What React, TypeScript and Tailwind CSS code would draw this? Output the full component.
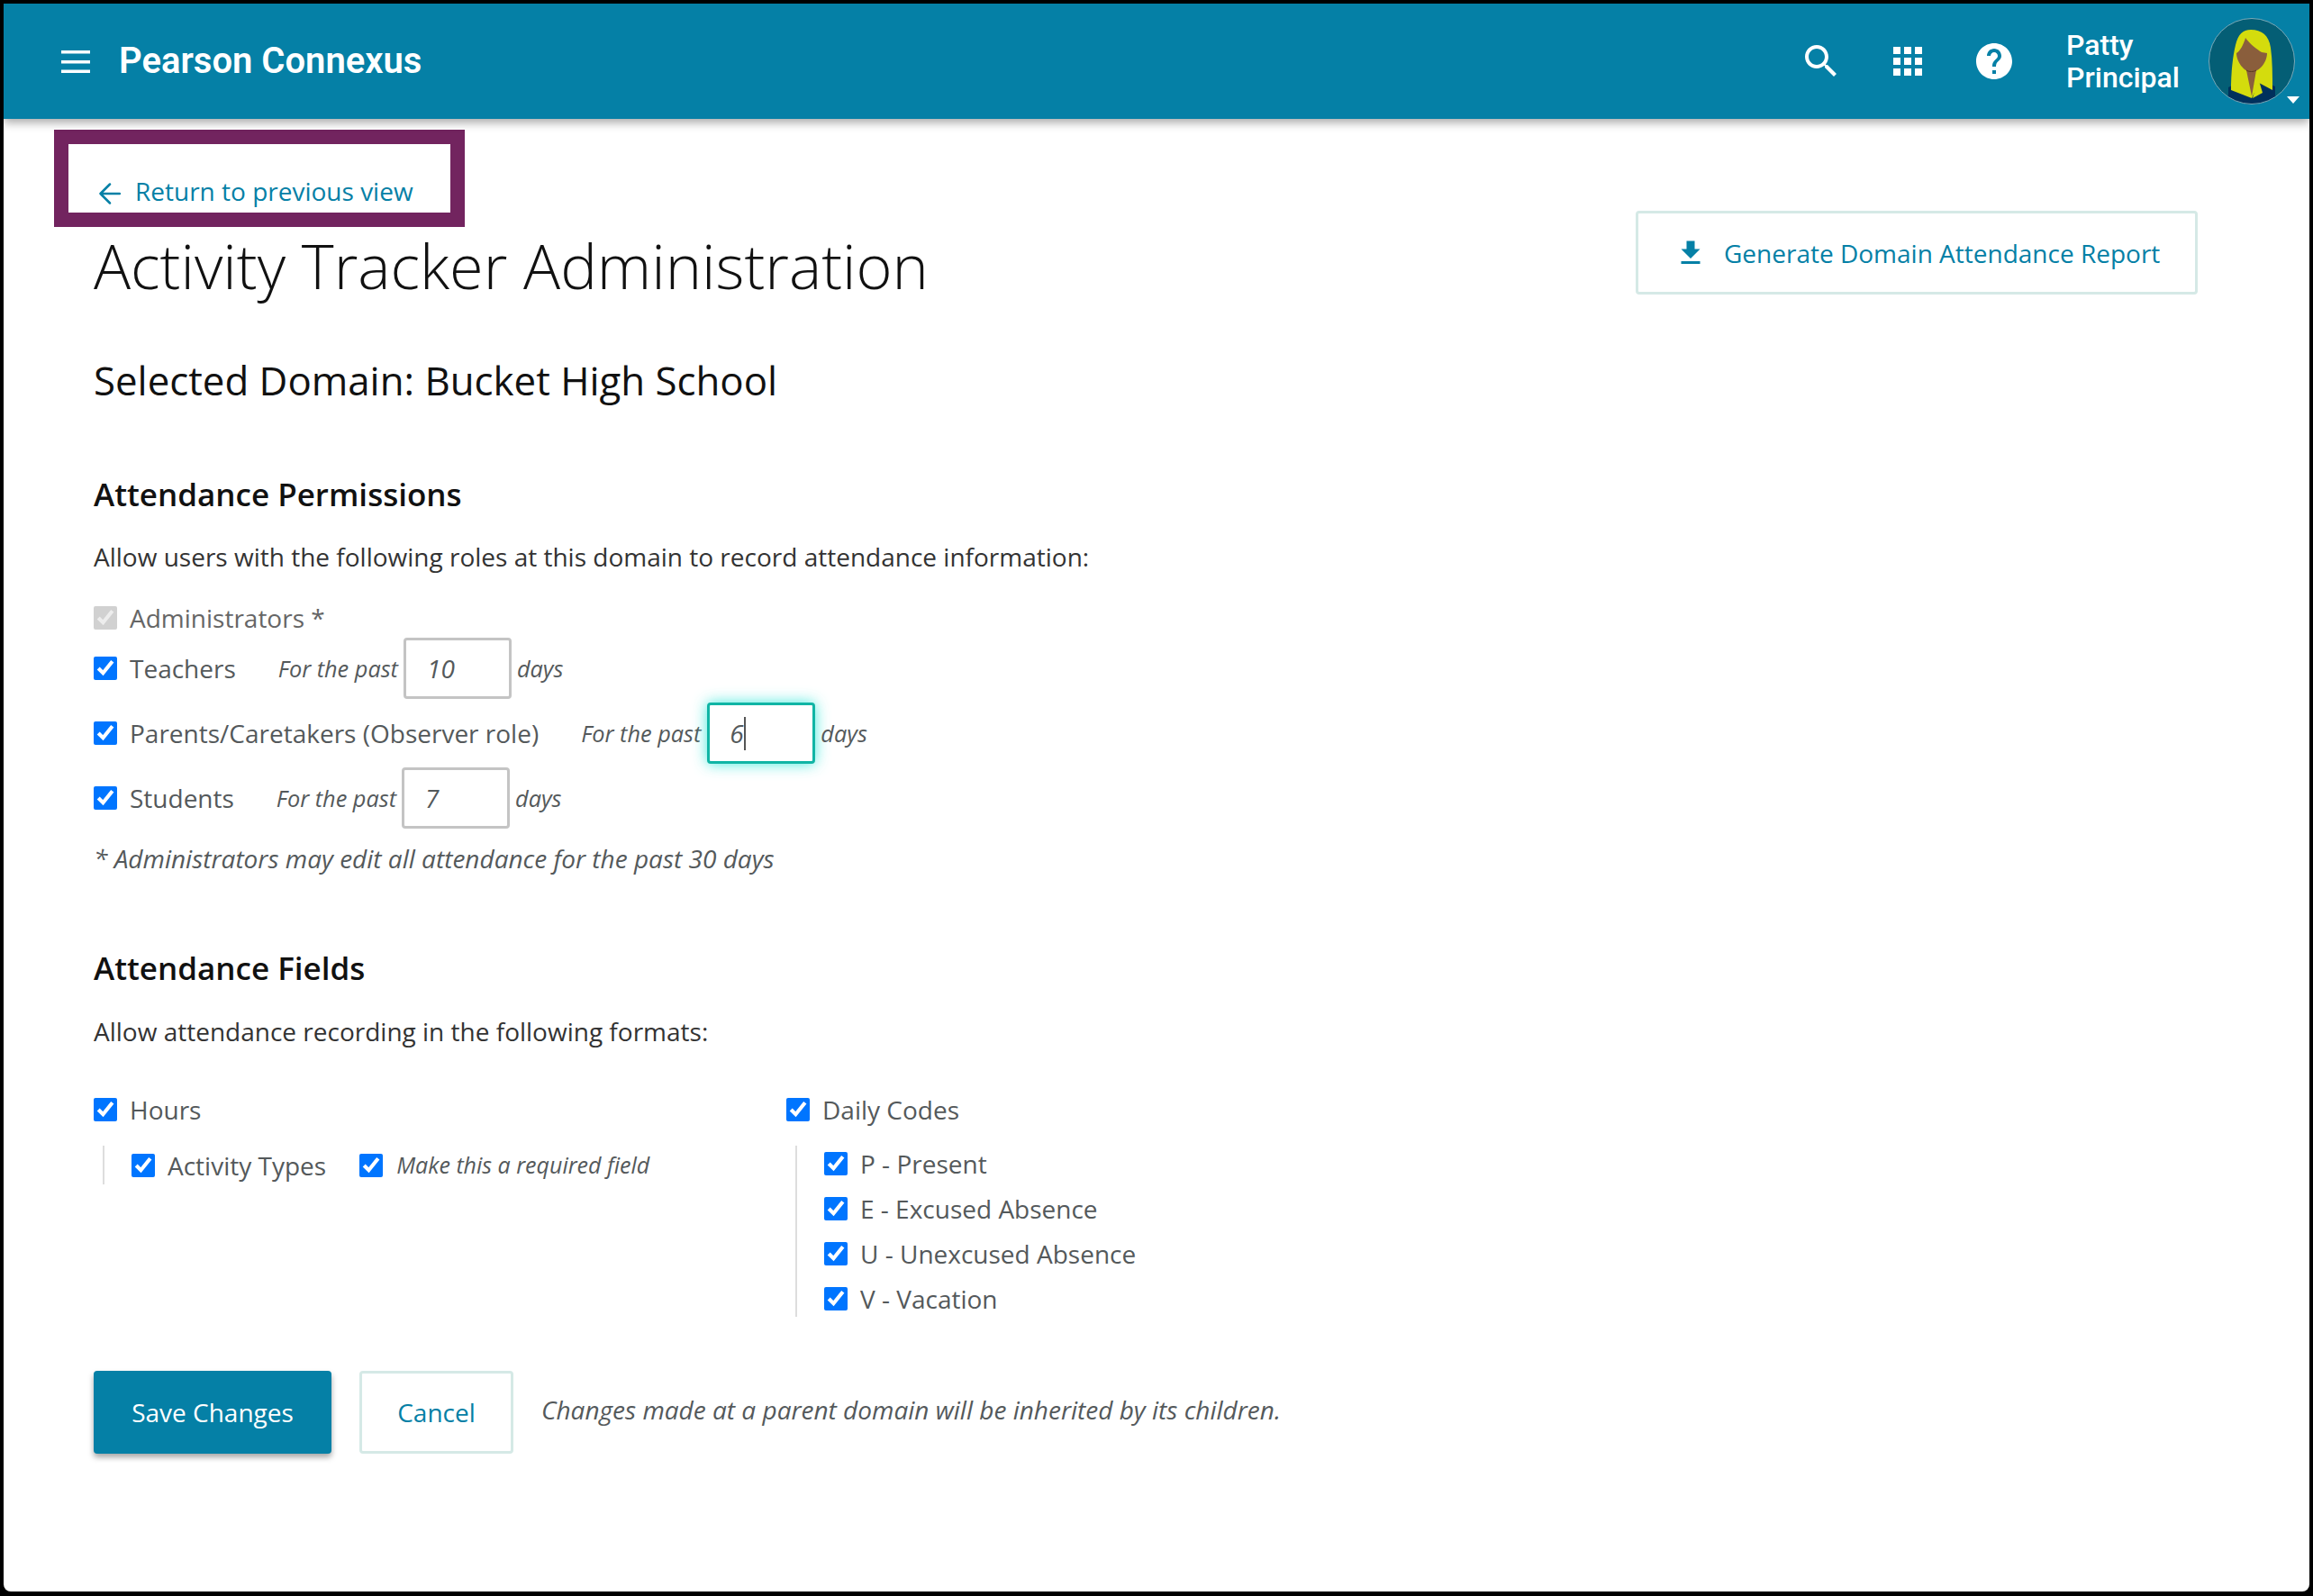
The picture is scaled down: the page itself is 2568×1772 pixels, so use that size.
import type { ReactNode } from "react";

const BODY = "font-['Open_Sans',sans-serif]";

function Check({ disabled }: { disabled?: boolean }) {
  return (
    <input
      type="checkbox"
      defaultChecked
      disabled={disabled}
      className="w-[26px] h-[26px] m-0 shrink-0"
    />
  );
}

function DaysField({ value, gap, focused }: { value: string; gap: string; focused?: boolean }) {
  return (
    <div className={`flex items-center ${gap}`}>
      <span className="pt-[2px] text-[25.3px] italic text-[#54595b]">For the past</span>
      <div
        className={
          focused
            ? "ml-[7px] w-[120px] h-[68px] flex items-center pl-[22px] bg-white rounded-[4px] border-[3px] border-[#10b5a5] shadow-[0_0_16px_rgba(40,230,215,0.85)] text-[28px] italic text-[#54595b]"
            : "ml-[6px] w-[120px] h-[68px] flex items-center pl-[23px] bg-white rounded-[4px] border-[3px] border-[#c4c4c4] text-[28px] italic text-[#54595b]"
        }
      >
        <span>{value}</span>
        {focused && <span className="w-[2px] h-[37px] bg-[#555]" />}
      </div>
      <span className="ml-[6px] pt-[2px] text-[25.3px] italic text-[#54595b]">days</span>
    </div>
  );
}

function RoleRow({ label, children, className }: { label: string; children?: ReactNode; className?: string }) {
  return (
    <div className={`flex items-center gap-[14px] text-[28px] text-[#54595b] ${className ?? ""}`}>
      <Check />
      <span>{label}</span>
      {children}
    </div>
  );
}

function CodeRow({ label }: { label: string }) {
  return (
    <div className="h-[50px] shrink-0 flex items-center gap-[14px] text-[28px] text-[#54595b]">
      <Check />
      <span>{label}</span>
    </div>
  );
}

function Avatar() {
  return (
    <svg viewBox="0 0 96 96" className="w-[96px] h-[96px]">
      <defs>
        <clipPath id="av">
          <circle cx="48" cy="48" r="47.5" />
        </clipPath>
      </defs>
      <g clipPath="url(#av)">
        <rect width="96" height="96" fill="#045e75" />
        <path d="M22 96V77l12-6h28l12 5v20z" fill="#00305c" />
        <path d="M47 13c12 0 20 6 22 20 2 14 2 30 2 47l-15-8-8 17-23-9c0-20 2-38 5-50 3-12 8-17 17-17z" fill="#d4dc0d" />
        <path d="M42 58h11l-5 29z" fill="#8a5e3c" />
        <path d="M55 66l5 17-11 6z" fill="#d4dc0d" />
        <path d="M41 22c4 6 13 13 18 16l6 1c0 9-7 20-17 21-9 0-17-12-17-21 4-2 8-10 10-17z" fill="#8a5e3c" />
        <path d="M42 58c3 2 8 2 11 0" fill="none" stroke="#5a3a20" strokeWidth="1" />
      </g>
      <circle cx="48" cy="48" r="47.5" fill="none" stroke="#7aa9b8" strokeWidth="1" />
    </svg>
  );
}

export default function App() {
  return (
    <div className={`w-[2568px] h-[1772px] bg-black pt-[4px] px-[4px] pb-[5px] ${BODY}`}>
      <div className="relative w-full h-full flex flex-col bg-white overflow-hidden rounded-b-[8px]">
        <header className="h-[128px] shrink-0 flex items-center bg-[#0580a6] text-white pl-[64px] pr-[16px] shadow-[0_4px_10px_rgba(0,0,0,0.35)] z-10">
          <svg viewBox="0 0 32 25" className="w-[32px] h-[25px]" fill="white">
            <rect width="32" height="3.5" y="0" />
            <rect width="32" height="3.5" y="11" />
            <rect width="32" height="3.5" y="21.5" />
          </svg>
          <span className="ml-[32px] text-[40px] font-semibold font-['Roboto',sans-serif]">Pearson Connexus</span>
          <div className="ml-auto flex items-center">
            <svg viewBox="0 0 24 24" className="w-[48px] h-[48px]" fill="white">
              <path d="M15.5 14h-.79l-.28-.27C15.41 12.59 16 11.11 16 9.5 16 5.91 13.09 3 9.5 3S3 5.91 3 9.5 5.91 16 9.5 16c1.61 0 3.09-.59 4.23-1.57l.27.28v.79l5 4.99L20.49 19l-4.99-5zm-6 0C7.01 14 5 11.99 5 9.5S7.01 5 9.5 5 14 7.01 14 9.5 11.99 14 9.5 14z" />
            </svg>
            <svg viewBox="0 0 24 24" className="ml-[48px] w-[48px] h-[48px]" fill="white">
              <path d="M4 8h4V4H4v4zm6 12h4v-4h-4v4zm-6 0h4v-4H4v4zm0-6h4v-4H4v4zm6 0h4v-4h-4v4zm6-10v4h4V4h-4zm-6 4h4V4h-4v4zm6 6h4v-4h-4v4zm0 6h4v-4h-4v4z" />
            </svg>
            <svg viewBox="0 0 24 24" className="ml-[48px] w-[48px] h-[48px]" fill="white">
              <path d="M12 2C6.48 2 2 6.48 2 12s4.48 10 10 10 10-4.48 10-10S17.52 2 12 2zm1 17h-2v-2h2v2zm2.07-7.75l-.9.92C13.45 12.9 13 13.5 13 15h-2v-.5c0-1.1.45-2.1 1.17-2.83l1.24-1.26c.37-.36.59-.86.59-1.41 0-1.1-.9-2-2-2s-2 .9-2 2H8c0-2.21 1.79-4 4-4s4 1.79 4 4c0 .88-.36 1.68-.93 2.25z" />
            </svg>
            <div className="ml-[56px] w-[158px] text-[32px] leading-[36px] font-medium font-['Roboto',sans-serif]">
              Patty
              <br />
              Principal
            </div>
            <div className="relative">
              <Avatar />
              <div className="absolute right-[-5px] bottom-[1px] w-0 h-0 border-l-[7px] border-r-[7px] border-t-[8px] border-l-transparent border-r-transparent border-t-white" />
            </div>
          </div>
        </header>

        {/* highlight box around the back link */}
        <div className="absolute left-[56px] top-[140px] w-[456px] h-[108px] border-[16px] border-[#72245f]" />

        <main className="pl-[100px] pr-[124px] flex flex-col">
          <a className="mt-[63px] h-[34px] flex items-center text-[28px] text-[#0580a6]">
            <svg viewBox="0 0 24 24" className="ml-[6px] w-[24px] h-[24px] mt-[6px]" fill="none" stroke="#0580a6" strokeWidth="2.5" strokeLinecap="round" strokeLinejoin="round">
              <path d="M23 12H1.5M12 1.5L1.5 12 12 22.5" />
            </svg>
            <span className="ml-[16px]">Return to previous view</span>
          </a>

          <div className="mt-[5px] flex justify-between items-start">
            <h1 className="mt-[11px] text-[68.4px] leading-[100px] font-light text-[#111]">Activity Tracker Administration</h1>
            <button className="w-[624px] h-[93px] flex items-center pl-[40px] border-[3px] border-[#d5e9e6] rounded-[4px] bg-white text-[28px] text-[#0580a6]">
              <svg viewBox="0 0 24 24" className="w-[36px] h-[36px] shrink-0" fill="#0580a6">
                <path d="M19 9h-4V3H9v6H5l7 7 7-7zM5 18v2h14v-2H5z" />
              </svg>
              <span className="ml-[19px]">Generate Domain Attendance Report</span>
            </button>
          </div>

          <h2 className="mt-[47px] text-[43.8px] leading-[60px] text-[#111]">Selected Domain: Bucket High School</h2>

          <h3 className="mt-[72px] text-[35px] leading-[50px] font-semibold text-[#111]">Attendance Permissions</h3>
          <p className="mt-[24px] text-[28px] leading-[40px] text-[#333]">
            Allow users with the following roles at this domain to record attendance information:
          </p>

          <div className="mt-[31px] h-[34px] flex items-center gap-[14px] text-[28px] text-[#666]">
            <Check disabled />
            <span>Administrators *</span>
          </div>
          <RoleRow label="Teachers" className="mt-[5px] h-[68px]">
            <DaysField value="10" gap="ml-[33px]" />
          </RoleRow>
          <RoleRow label="Parents/Caretakers (Observer role)" className="mt-[4px] h-[68px]">
            <DaysField value="6" gap="ml-[33px]" focused />
          </RoleRow>
          <RoleRow label="Students" className="mt-[4px] h-[68px]">
            <DaysField value="7" gap="ml-[33px]" />
          </RoleRow>
          <p className="mt-[13px] text-[28px] leading-[40px] italic text-[#54595b]">
            * Administrators may edit all attendance for the past 30 days
          </p>

          <h3 className="mt-[77px] text-[35px] leading-[50px] font-semibold text-[#111]">Attendance Fields</h3>
          <p className="mt-[25px] text-[28px] leading-[40px] text-[#333]">Allow attendance recording in the following formats:</p>

          <div className="mt-[47px] flex items-start">
            <div className="w-[769px]">
              <div className="h-[40px] flex items-center gap-[14px] text-[28px] text-[#54595b]">
                <Check />
                <span>Hours</span>
              </div>
              <div className="mt-[20px] ml-[10px] h-[43px] flex items-center gap-[14px] pl-[30px] border-l-[2px] border-[#ddd] text-[28px] text-[#54595b]">
                <Check />
                <span>Activity Types</span>
                <span className="ml-[23px] flex items-center gap-[15px] text-[25px] italic">
                  <Check />
                  Make this a required field
                </span>
              </div>
            </div>
            <div>
              <div className="h-[40px] flex items-center gap-[14px] text-[28px] text-[#54595b]">
                <Check />
                <span>Daily Codes</span>
              </div>
              <div className="mt-[20px] ml-[10px] h-[190px] pl-[30px] flex flex-col justify-center border-l-[2px] border-[#ddd]">
                <CodeRow label="P - Present" />
                <CodeRow label="E - Excused Absence" />
                <CodeRow label="U - Unexcused Absence" />
                <CodeRow label="V - Vacation" />
              </div>
            </div>
          </div>

          <div className="mt-[60px] flex items-start">
            <button className="w-[264px] h-[92px] rounded-[4px] bg-[#0580a6] text-white text-[28px] shadow-[0_4px_6px_rgba(0,0,0,0.35)]">
              Save Changes
            </button>
            <button className="ml-[31px] w-[171px] h-[92px] rounded-[4px] border-[3px] border-[#d5e9e6] bg-white text-[#0580a6] text-[28px]">
              Cancel
            </button>
            <span className="ml-[31px] mt-[22px] text-[28px] italic text-[#54595b]">
              Changes made at a parent domain will be inherited by its children.
            </span>
          </div>
        </main>
      </div>
    </div>
  );
}
